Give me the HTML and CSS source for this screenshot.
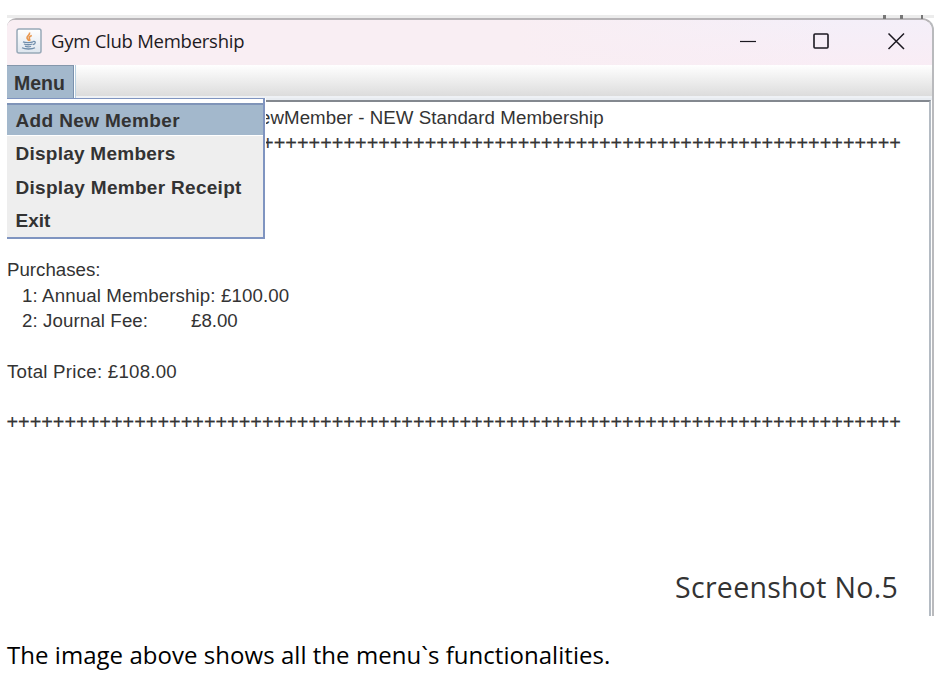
FILE: index.html
```html
<!DOCTYPE html>
<html lang="en">
<head>
<meta charset="utf-8">
<title>Gym Club Membership</title>
<link rel="stylesheet" href="styles.css">
</head>
<body>
<main class="figure">
  <div class="behind"><i></i><i></i><i></i></div>
  <section class="window">
    <header class="titlebar">
      <svg class="java" width="26" height="26" viewBox="0 0 26 26">
        <defs><linearGradient id="g" x1="0" y1="0" x2="0" y2="1"><stop offset="0" stop-color="#fff"/><stop offset="1" stop-color="#dde5ee"/></linearGradient></defs>
        <rect x="1" y="1" width="24" height="24" rx="2" fill="url(#g)" stroke="#98a9b8" stroke-width="1.5"/>
        <path d="M13.500 4.500c1 2.500-3 3.500-2.500 5.500.3 1.200 1.500 1.800 1.800 3M15.800 7.500c-2 .8-3 1.800-2.500 3 .3.900.9 1.200.2 2.500" fill="none" stroke="#e9974f" stroke-width="1.600"/>
        <path d="M7 13.800c2 1 8 1 10 0M8 16c2 1 6.500 1 8.500 0M9 18.200c2 .8 4.500.8 6 0M17 13.500c3-.9 3 2.200 0 3.200M6 19.800c3 1.600 10 1.600 13 0" fill="none" stroke="#6f8dab" stroke-width="1.300"/>
      </svg>
      <h1 class="title">Gym Club Membership</h1>
      <svg class="controls" width="170" height="20" viewBox="0 0 170 20" fill="none" stroke="#1b1820">
        <path d="M3 10.500h16" stroke-width="1.200"/>
        <rect x="77" y="3" width="14" height="14" rx="1" stroke-width="1.600"/>
        <path d="M151.500 2.500l15.500 15.500M167 2.500L151.500 18" stroke-width="1.500"/>
      </svg>
    </header>
    <nav class="menubar">
      <span class="menu">Menu</span>
      <ul class="popup">
        <li class="selected add">Add New Member</li>
        <li class="members">Display Members</li>
        <li class="receipt">Display Member Receipt</li>
        <li class="exit">Exit</li>
      </ul>
    </nav>
    <div class="textarea">
      <p class="heading">ewMember - NEW Standard Membership</p>
      <p class="plus first">+++++++++++++++++++++++++++++++++++++++++++++++++++++++</p>
      <p></p><p></p><p></p><p></p>
      <p>Purchases:</p>
      <p class="item annual">1: Annual Membership: £100.00</p>
      <p class="item"><span class="fee">2: Journal Fee:</span><span>£8.00</span></p>
      <p></p>
      <p class="total">Total Price: £108.00</p>
      <p></p>
      <p class="plus">+++++++++++++++++++++++++++++++++++++++++++++++++++++++++++++++++++++++++++++</p>
      <div class="label">Screenshot No.5</div>
    </div>
  </section>
  <p class="caption">The image above shows all the menu`s functionalities.</p>
</main>
</body>
</html>
```
FILE: styles.css
```css
* { box-sizing: border-box; margin: 0; padding: 0; }
body { background: #fff; font-family: "Liberation Sans", sans-serif; color: #333; overflow: hidden; }
.figure { width: 934px; padding: 15px 0 0 7px; }
.behind { height: 3px; background: #ececec; display: flex; justify-content: flex-end; gap: 14px; padding-right: 11px; }
.behind i { width: 3px; height: 4px; background: #777; }
.behind i:last-child { margin-left: 4px; width: 2px; }
.window { height: 598px; border-top: 2px solid #b8b5b8; border-right: 2px solid #b9babd; border-radius: 9px 12px 0 0; }
.titlebar { height: 45px; display: flex; align-items: center; padding: 0 25px 4px 9px; background: linear-gradient(to right, #f9eef3 55%, #f9edf500 90%), linear-gradient(#f4eff9, #f9edf5); border-radius: 7px 10px 0 0; }
.title { font: 400 18.5px/30px "Open Sans", sans-serif; letter-spacing: -.25px; color: #1d1a1e; margin-left: 9px; white-space: nowrap; }
.controls { margin-left: auto; }
.menubar { position: relative; height: 35px; background: linear-gradient(#fff, #dcdcdc 94%, #eef1f5 95%); border-bottom: 2px solid #e8ecf1; }
.menu { display: block; width: 67px; height: 34px; background: #a3b8cc; border-top: 1px solid #8597ab; border-right: 1px solid #7b91ad; box-shadow: 1px 0 #fff, 2px 0 #b8cfe0; padding-left: 7px; font: bold 19.500px/34px "Liberation Sans", sans-serif; }
.popup { position: absolute; left: 0; top: 33px; width: 258px; height: 141px; list-style: none; background: #eee; border: 2px solid #7f94c0; border-left: 0; border-top-width: 1px; font: bold 19px/33.300px "Liberation Sans", sans-serif; box-shadow: inset 0 4px #fff, 1px 0 #fff; padding-top: 4px; white-space: nowrap; }
.popup li { padding-left: 8.500px; height: 33.300px; line-height: 35px; }
.popup .selected { background: #a3b8cc; border-top: 2px solid #7f94b8; border-bottom: 1px solid #fff; line-height: 31.500px; }
.add { letter-spacing: .36px; }
.members { letter-spacing: .25px; }
.receipt { letter-spacing: .3px; }
.textarea { height: 516px; border-top: 2px solid #83888f; border-right: 2px solid #b4bbc3; margin-right: 1px; padding-top: 3px; font-size: 18.700px; line-height: 25.370px; white-space: nowrap; }
.textarea p { height: 25.370px; }
.textarea .heading { padding-left: 253px; letter-spacing: .06px; }
.textarea .plus { font-size: 19.900px; line-height: 27px; margin-left: -.6px; -webkit-text-stroke: .15px #333; }
.textarea .first { padding-left: 255.700px; }
.textarea .item { padding-left: 15px; display: flex; }
.annual { letter-spacing: .12px; }
.total { letter-spacing: .24px; }
.fee { width: 169px; letter-spacing: .1px; }
.label { margin: 132px 0 0 668px; font: 400 28.500px/40px "Open Sans", sans-serif; color: #333; letter-spacing: .3px; }
.caption { margin-top: 22px; font: 24px/34px "Open Sans", sans-serif; color: #000; white-space: nowrap; letter-spacing: .04px; }
```
